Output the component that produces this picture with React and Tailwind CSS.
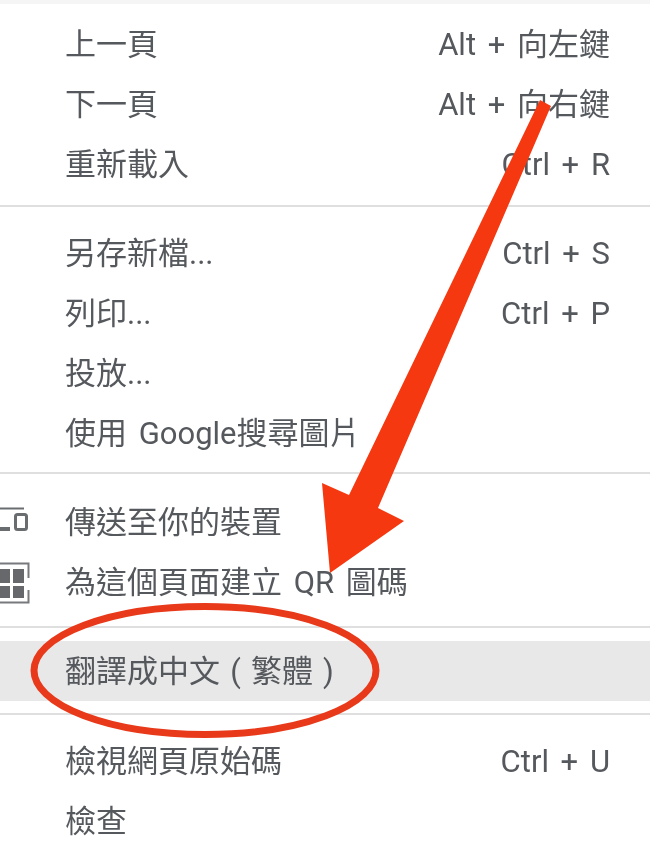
const FONT = "font-['Roboto','Noto_Sans_CJK_TC','Noto_Sans_CJK_JP',sans-serif]";

function Row({ label, shortcut, icon, highlighted, className = "h-[60px]" }) {
  return (
    <div className={`flex items-center justify-between pl-[65px] pr-[40px] ${highlighted ? "bg-[#e8e8e8]" : ""} ${icon ? "relative" : ""} ${className}`}>
      {icon ? <div className="absolute left-0 top-0 flex h-full w-[30px] items-center">{icon}</div> : null}
      <span>{label}</span>
      {shortcut ? <span>{shortcut}</span> : null}
    </div>
  );
}

function Sep({ className = "" }) {
  return <div className={`h-[2px] bg-[#dfdfdf] ${className}`} />;
}

const DeviceIcon = (
  <svg width="30" height="30" viewBox="0 0 30 30" fill="none" stroke="#6a6d70">
    <path d="M0 1.5H24" strokeWidth="2" />
    <path d="M0 22H10" strokeWidth="4" />
    <rect x="15.5" y="7.5" width="11" height="15" rx="2" strokeWidth="3" />
  </svg>
);

const QrIcon = (
  <svg width="30" height="42" viewBox="0 0 30 42" fill="none">
    <path d="M0 1.5H28.5V16M28.5 28V40.5H0" stroke="#77797c" strokeWidth="2" />
    <g fill="#66686b">
      <rect x="-2" y="7" width="12" height="14" />
      <rect x="13" y="7" width="11" height="14" />
      <rect x="-2" y="24" width="12" height="12" />
      <rect x="13" y="24" width="11" height="12" />
    </g>
  </svg>
);

const Translate = (
  <>
    翻譯成中文
    <span className="inline-block w-[31px] text-center">(</span>
    繁體
    <span className="inline-block w-[31px] text-center">)</span>
  </>
);

function Menu() {
  return (
    <div className={`${FONT} text-[31px] leading-none [word-spacing:4px] text-[#55585c] blur-[0.5px]`}>
      <div className="h-[4px] bg-[#f5f5f5]" />
      <div className="pt-[10px]">
        <Row label="上一頁" shortcut="Alt + 向左鍵" />
        <Row label="下一頁" shortcut="Alt + 向右鍵" />
        <Row label="重新載入" shortcut="Ctrl + R" />
      </div>
      <Sep className="mt-[11px]" />
      <div className="pt-[16px]">
        <Row label="另存新檔..." shortcut="Ctrl + S" />
        <Row label="列印..." shortcut="Ctrl + P" />
        <Row label="投放..." />
        <Row label="使用 Google搜尋圖片" />
      </div>
      <Sep className="mt-[9px]" />
      <div className="pt-[18px]">
        <Row label="傳送至你的裝置" icon={DeviceIcon} />
        <Row label="為這個頁面建立 QR 圖碼" icon={QrIcon} className="h-[61px]" />
      </div>
      <Sep className="mt-[13px]" />
      <Row label={Translate} highlighted className="mt-[13px] h-[60px]" />
      <Sep className="mt-[12px]" />
      <div className="pt-[16px]">
        <Row label="檢視網頁原始碼" shortcut="Ctrl + U" />
        <Row label="檢查" />
      </div>
    </div>
  );
}

export default function App() {
  return (
    <div className="relative h-[857px] w-[650px] overflow-hidden bg-white">
      <Menu />
      <svg className="absolute left-0 top-0" width="650" height="857" viewBox="0 0 650 857" fill="none">
        <polygon
          points="540,100 551,106 378,508 404,521 330,573 322,483 349,495"
          fill="#f5380f"
        />
        <ellipse cx="205" cy="670.5" rx="171" ry="64" stroke="#e8391a" strokeWidth="7" />
      </svg>
    </div>
  );
}
